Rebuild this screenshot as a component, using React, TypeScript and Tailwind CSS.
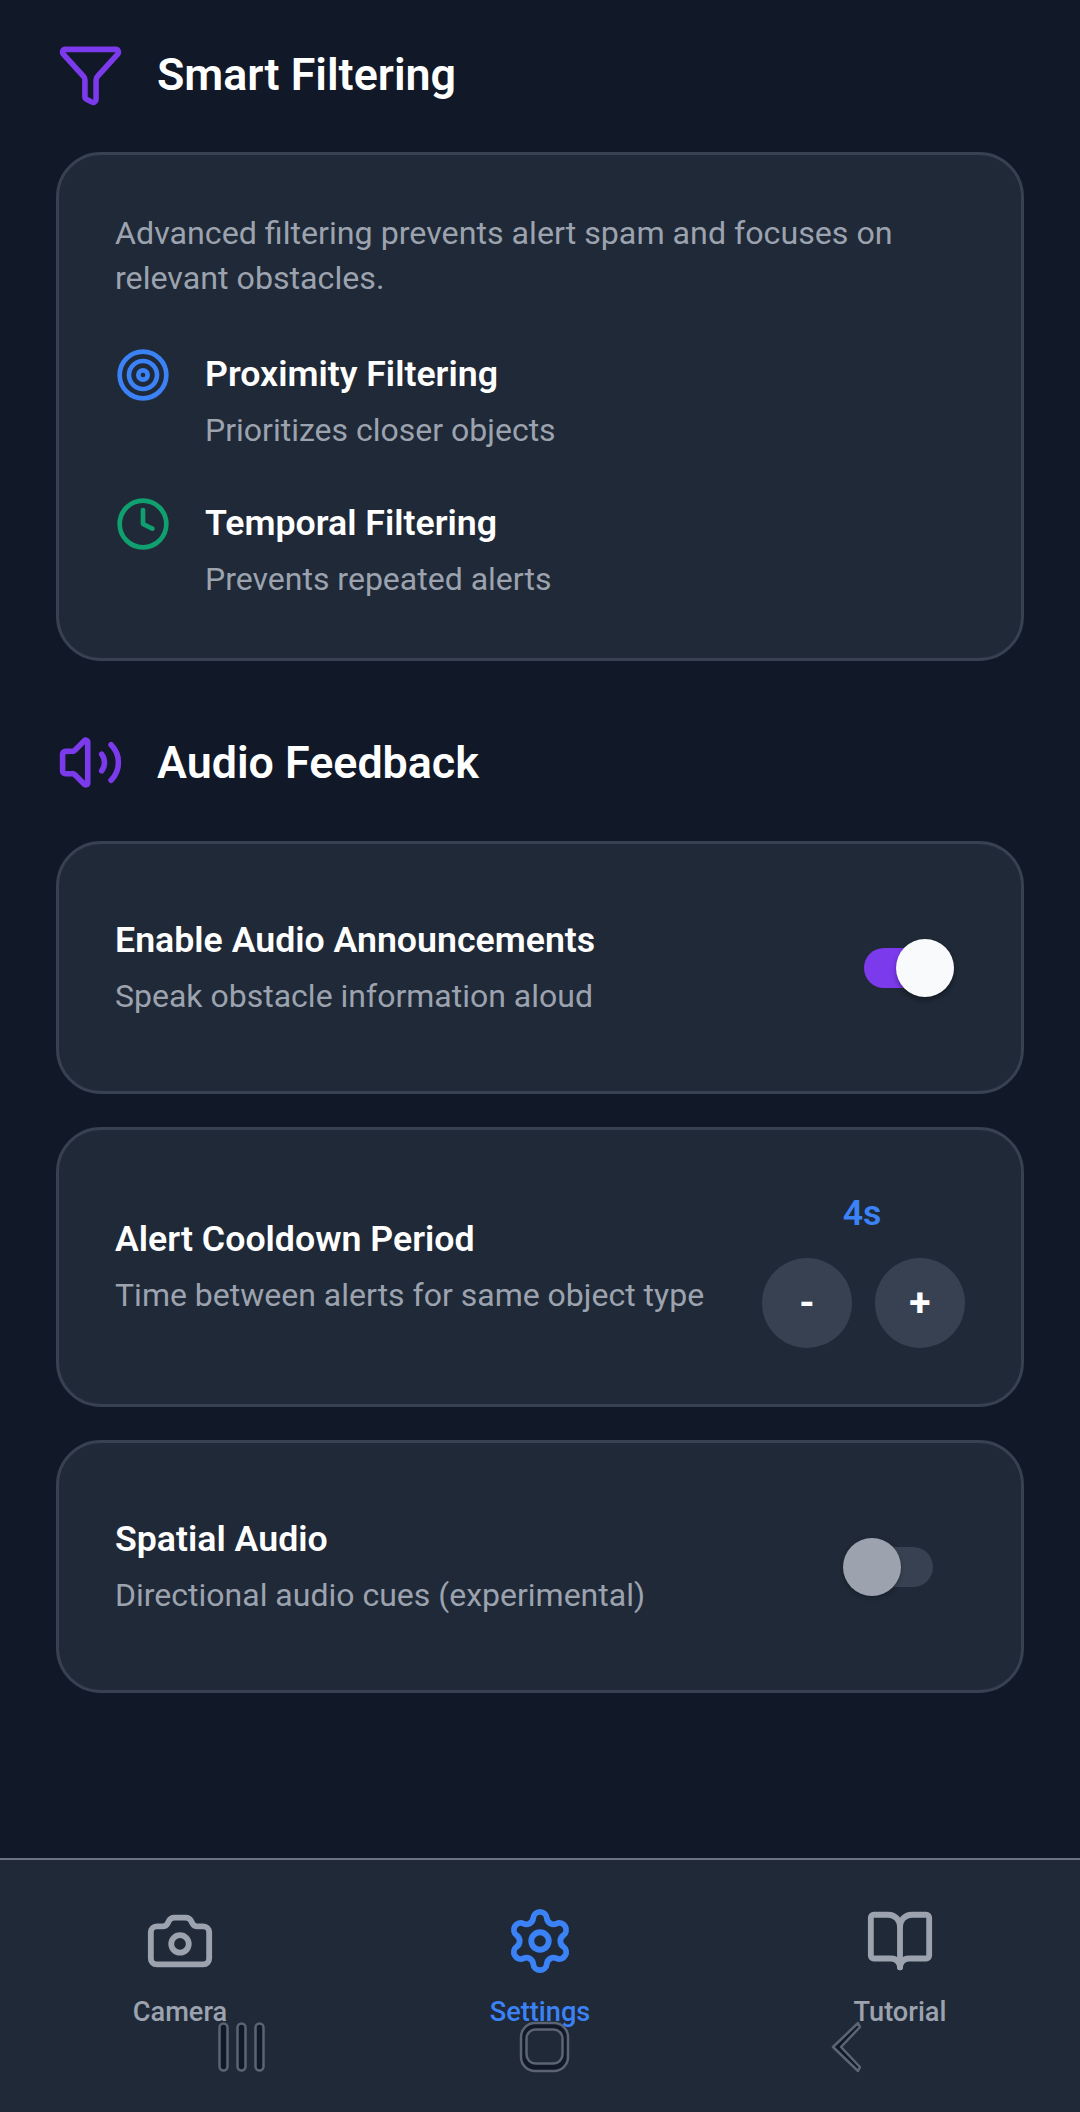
import { Camera, Settings, BookOpen, Funnel, Volume2, Target, Clock } from "lucide-react";
import type { ReactNode } from "react";

function SectionHeader({ icon, title }: { icon: ReactNode; title: string }) {
  return (
    <div className="flex items-center gap-[33px] h-[68px]">
      {icon}
      <h2 className="pt-[2px] text-[44.8px] leading-[68px] font-semibold text-white">{title}</h2>
    </div>
  );
}

function Card({ children }: { children: ReactNode }) {
  return (
    <div className="rounded-[45px] border-[3px] border-[#374151] bg-[#1f2937] p-[56px]">{children}</div>
  );
}

function SettingText({ title, sub }: { title: string; sub: string }) {
  return (
    <div className="flex flex-col gap-[10px]">
      <div className="text-[35.7px] leading-[47px] font-semibold text-white">{title}</div>
      <div className="text-[32px] leading-[45px] text-[#9ca3af]">{sub}</div>
    </div>
  );
}

function Toggle({ on }: { on: boolean }) {
  return (
    <div
      className={
        on
          ? "relative h-[40px] w-[90px] mr-[11px] rounded-full bg-[#7c3aed]"
          : "relative h-[40px] w-[90px] mr-[32px] rounded-full bg-[#374151]"
      }
    >
      <div
        className={
          on
            ? "absolute -top-[9px] right-0 h-[58px] w-[58px] rounded-full bg-[#f9fafb] shadow-[0_3px_5px_rgba(0,0,0,0.35)]"
            : "absolute -top-[9px] left-0 h-[58px] w-[58px] rounded-full bg-[#9ca3af] shadow-[0_2px_4px_rgba(0,0,0,0.25)]"
        }
      />
    </div>
  );
}

function StepButton({ label }: { label: string }) {
  return (
    <div className="flex h-[90px] w-[90px] items-center justify-center rounded-full bg-[#374151] text-[39px] font-bold text-white">
      {label}
    </div>
  );
}

function FilterItem({ icon, title, sub }: { icon: ReactNode; title: string; sub: string }) {
  return (
    <div className="flex items-start gap-[34px]">
      <div className="-mt-[4px]">{icon}</div>
      <SettingText title={title} sub={sub} />
    </div>
  );
}

function NavItem({ icon, label, active }: { icon: ReactNode; label: string; active?: boolean }) {
  return (
    <div className="flex flex-1 flex-col items-center gap-[17px]">
      {icon}
      <span className={active ? "text-[27.2px] leading-[39px] font-medium text-[#3b82f6]" : "text-[27.2px] leading-[39px] font-medium text-[#9ca3af]"}>
        {label}
      </span>
    </div>
  );
}

// android system buttons drawn over the tab bar
function SystemNav() {
  return (
    <svg className="absolute left-0 top-[160px]" width="1080" height="56" viewBox="0 0 1080 56" fill="none" stroke="#5b6472" strokeWidth="2.5">
      <rect x="219.5" y="3.5" width="8" height="47" rx="4" fill="#111827" />
      <rect x="237.5" y="3.5" width="8" height="47" rx="4" fill="#111827" />
      <rect x="255.5" y="3.5" width="8" height="47" rx="4" fill="#111827" />
      <rect x="521" y="3" width="47" height="48" rx="14" fill="#111827" />
      <rect x="526.5" y="9.5" width="36" height="34" rx="9" fill="#1f2937" />
      <path d="M860 7 L858 3 L833 27 L858 51 L860 47 L841 27 Z" fill="#111827" strokeLinejoin="round" />
    </svg>
  );
}

export default function App() {
  return (
    <div className="flex h-[2112px] w-[1080px] flex-col overflow-hidden bg-[#111827] font-['Roboto',sans-serif]">
      <main className="flex flex-1 flex-col px-[56px] pt-[40px]">
        <div className="pl-[1px]">
          <SectionHeader icon={<Funnel size={67} strokeWidth={2} className="text-[#7c3aed]" />} title="Smart Filtering" />
        </div>
        <div className="mt-[44px]">
          <Card>
            <p className="text-[32.2px] leading-[45px] text-[#9ca3af]">
              Advanced filtering prevents alert spam and focuses on relevant obstacles.
            </p>
            <div className="mt-[50px] flex flex-col gap-[47px]">
              <FilterItem
                icon={<Target size={56} strokeWidth={2} className="text-[#3b82f6]" />}
                title="Proximity Filtering"
                sub="Prioritizes closer objects"
              />
              <FilterItem
                icon={<Clock size={56} strokeWidth={2} className="text-[#10a070]" />}
                title="Temporal Filtering"
                sub="Prevents repeated alerts"
              />
            </div>
          </Card>
        </div>

        <div className="mt-[67px] pl-[1px]">
          <SectionHeader icon={<Volume2 size={67} strokeWidth={2} className="text-[#7c3aed]" />} title="Audio Feedback" />
        </div>
        <div className="mt-[45px] flex flex-col gap-[33px]">
          <Card>
            <div className="flex min-h-[135px] items-center justify-between">
              <SettingText title="Enable Audio Announcements" sub="Speak obstacle information aloud" />
              <Toggle on />
            </div>
          </Card>
          <Card>
            <div className="flex items-center justify-between">
              <SettingText title="Alert Cooldown Period" sub="Time between alerts for same object type" />
              <div className="flex flex-col items-center gap-[18px]">
                <div className="-ml-[3px] text-[35.7px] leading-[54px] font-semibold text-[#3b82f6]">4s</div>
                <div className="flex gap-[23px]">
                  <StepButton label="-" />
                  <StepButton label="+" />
                </div>
              </div>
            </div>
          </Card>
          <Card>
            <div className="flex min-h-[135px] items-center justify-between">
              <SettingText title="Spatial Audio" sub="Directional audio cues (experimental)" />
              <Toggle on={false} />
            </div>
          </Card>
        </div>
      </main>

      <nav className="relative flex h-[254px] border-t-2 border-[#6b7280] bg-[#1f2937] pt-[46px]">
        <NavItem icon={<Camera size={70} strokeWidth={2} className="text-[#9ca3af]" />} label="Camera" />
        <NavItem icon={<Settings size={70} strokeWidth={2} className="text-[#3b82f6]" />} label="Settings" active />
        <NavItem icon={<BookOpen size={70} strokeWidth={2} className="text-[#9ca3af]" />} label="Tutorial" />
        <SystemNav />
      </nav>
    </div>
  );
}
